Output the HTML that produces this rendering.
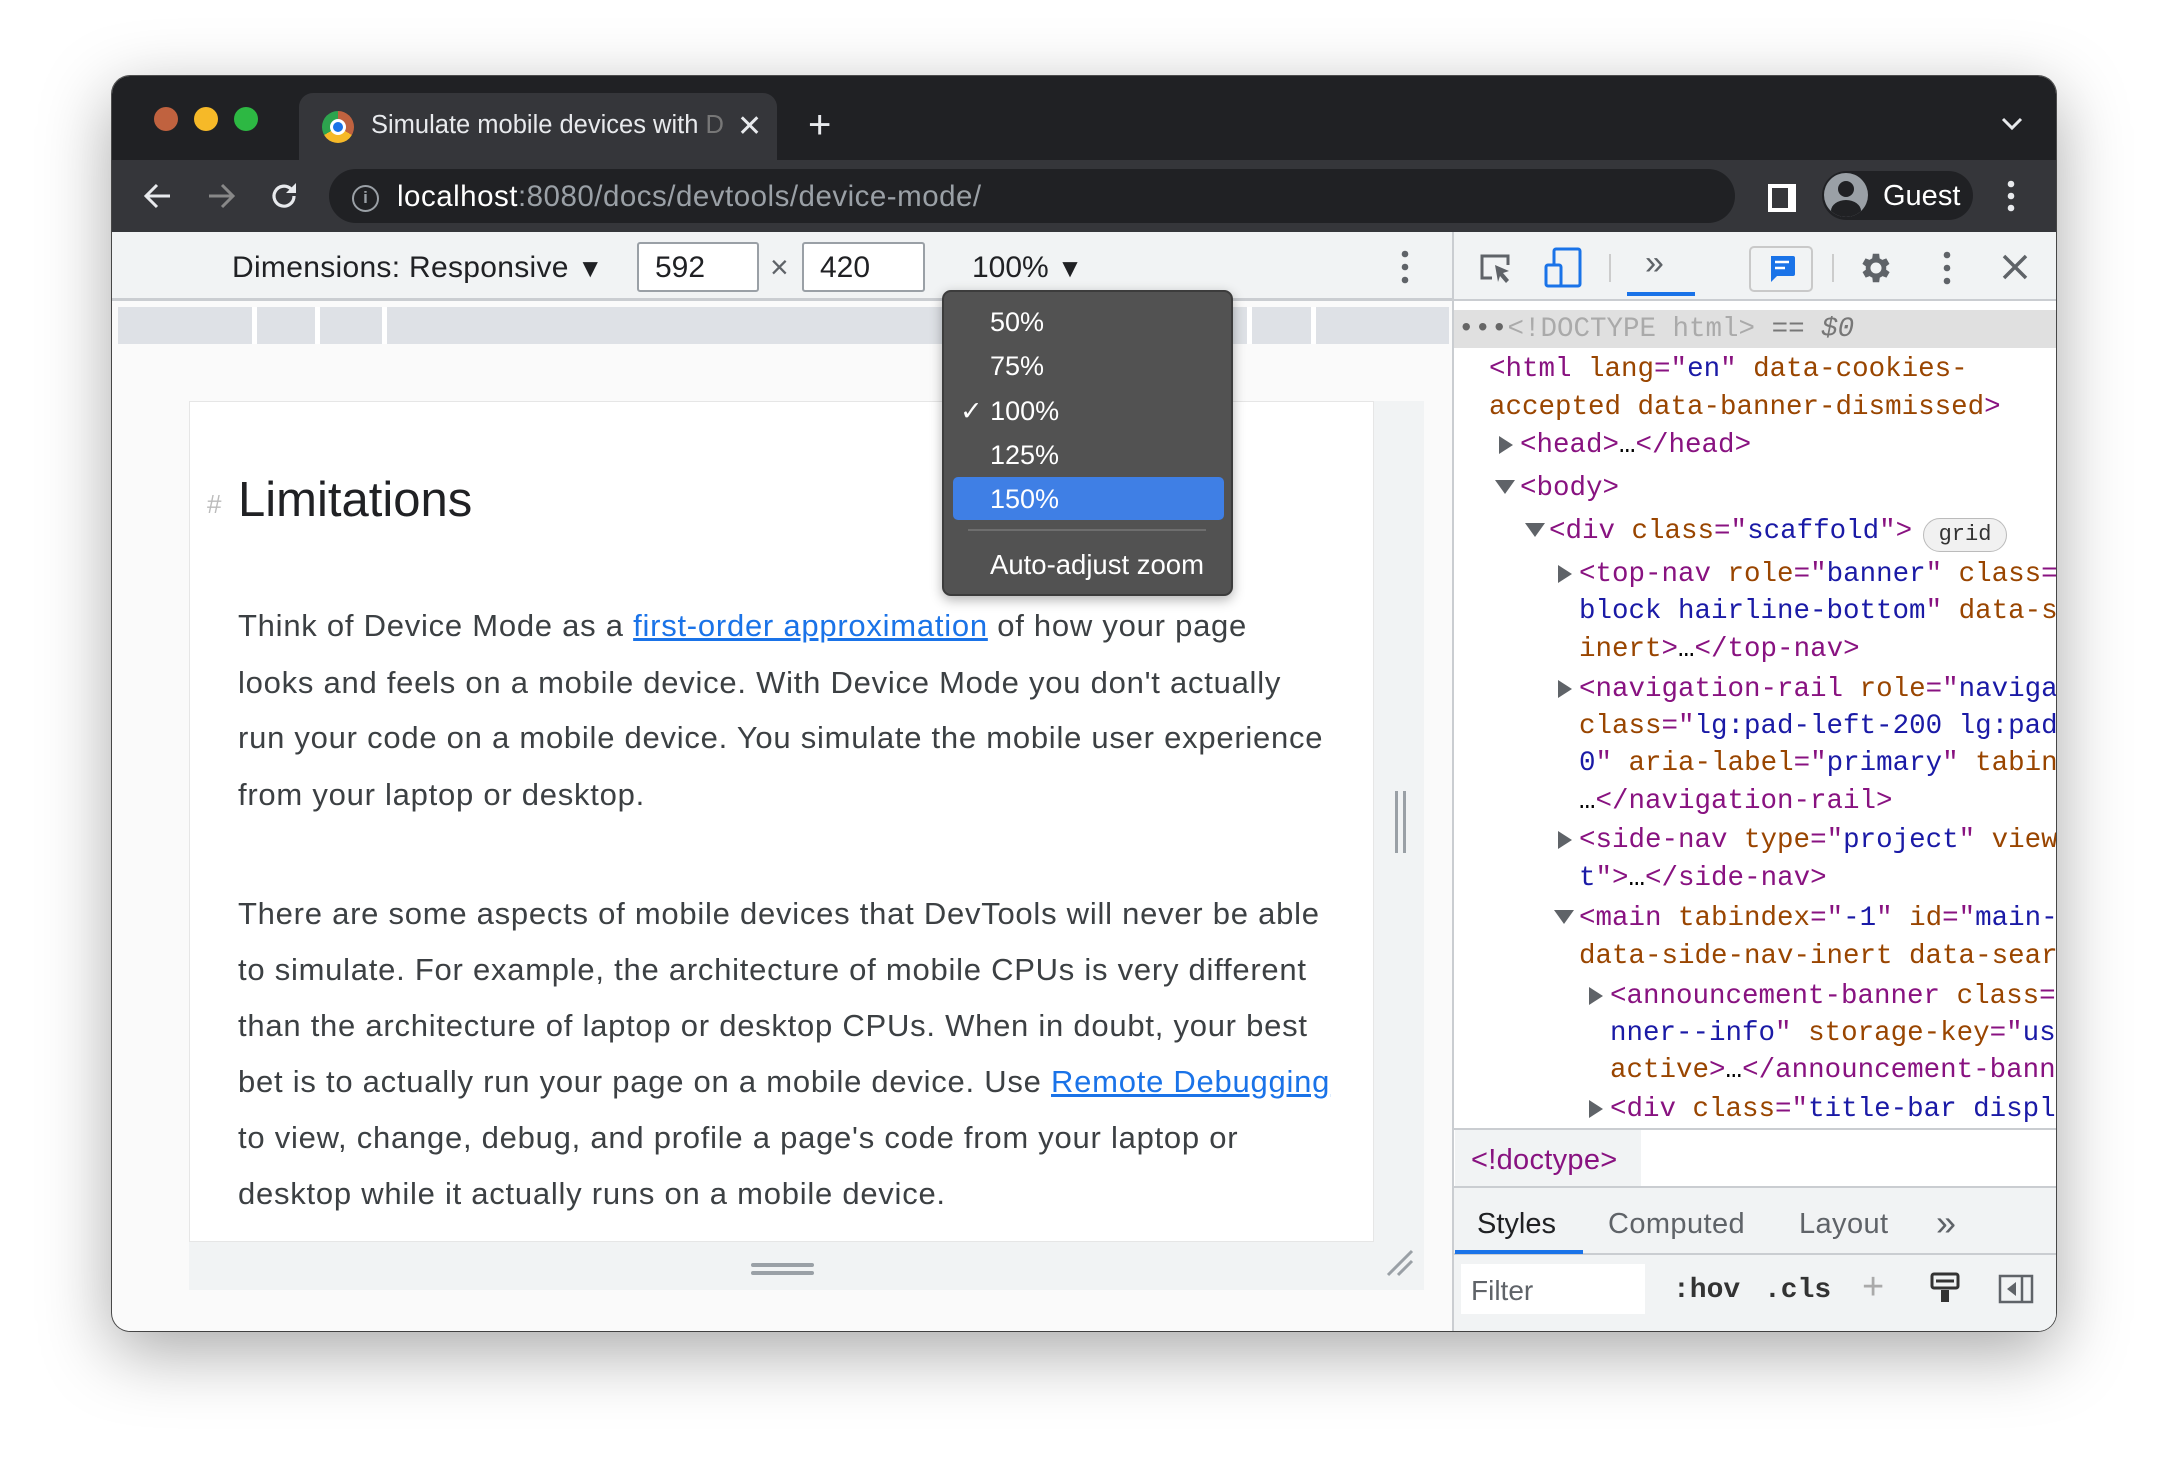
<!DOCTYPE html>
<html><head><meta charset="utf-8"><style>
*{margin:0;padding:0;box-sizing:border-box}
body{width:2168px;height:1480px;background:#fff;position:relative;overflow:hidden;font-family:"Liberation Sans",sans-serif}
.a{position:absolute;white-space:nowrap}
.win{position:absolute;left:112px;top:76px;width:1944px;height:1255px;border-radius:18px;overflow:hidden;background:#fafafa;box-shadow:0 20px 70px rgba(0,0,0,.35),0 0 0 1px #555}
.mono{font-family:"Liberation Mono",monospace;font-size:27.5px}
.t{color:#881280}.n{color:#994500}.v{color:#1a1aa6}
.p{font-size:31px;letter-spacing:0.75px;color:#3c4043}
.lk{color:#1a73e8;text-decoration:underline}
.dd{color:#fff;font-size:27px}
.tr{position:absolute;width:0;height:0;border-left:14px solid #5f6368;border-top:9px solid transparent;border-bottom:9px solid transparent}
.td{position:absolute;width:0;height:0;border-top:14px solid #5f6368;border-left:10px solid transparent;border-right:10px solid transparent}
</style></head><body>
<div class="win">
 <div class="a" style="left:0;top:0;width:1944px;height:84px;background:#202124"></div>
 <div class="a" style="left:42px;top:31px;width:24px;height:24px;border-radius:50%;background:#c0623f"></div>
 <div class="a" style="left:82px;top:31px;width:24px;height:24px;border-radius:50%;background:#f6b928"></div>
 <div class="a" style="left:122px;top:31px;width:24px;height:24px;border-radius:50%;background:#2db843"></div>
 <div class="a" style="left:187px;top:17px;width:478px;height:70px;background:#35363a;border-radius:14px 14px 0 0"></div>
 <div class="a" style="left:210px;top:35px;width:32px;height:32px;border-radius:50%;background:conic-gradient(#c0623f 0 120deg,#f6b928 120deg 240deg,#2da44e 240deg 360deg)"></div>
 <div class="a" style="left:218px;top:43px;width:16px;height:16px;border-radius:50%;background:#1a73e8;border:3px solid #fff"></div>
 <div class="a" style="left:259px;top:35px;font-size:25.5px;color:#e8eaed">Simulate mobile devices with <span style="color:#777">D</span></div>
 <div class="a" style="left:625px;top:33px;font-size:30px;color:#e8eaed">✕</div>
 <div class="a" style="left:696px;top:27px;font-size:40px;color:#e8eaed;font-weight:300">+</div>
 <svg class="a" style="left:1888px;top:40px" width="24" height="16"><path d="M3 3l9 9 9-9" stroke="#e8eaed" stroke-width="3" fill="none"/></svg>
 <div class="a" style="left:0;top:84px;width:1944px;height:72px;background:#35363a"></div>
 <svg class="a" style="left:30px;top:104px" width="32" height="32"><path d="M28 16H5M15 5L4 16l11 11" stroke="#e8eaed" stroke-width="3" fill="none"/></svg>
 <svg class="a" style="left:93px;top:104px" width="32" height="32"><path d="M4 16h23M17 5l11 11-11 11" stroke="#888" stroke-width="3" fill="none"/></svg>
 <svg class="a" style="left:157px;top:104px" width="32" height="32"><path d="M25 16a10 10 0 1 1-3-7" stroke="#e8eaed" stroke-width="3.2" fill="none"/><path d="M27 3v10H17z" fill="#e8eaed"/></svg>
 <div class="a" style="left:217px;top:93px;width:1406px;height:54px;border-radius:27px;background:#202124"></div>
 <div class="a" style="left:240px;top:109px;width:27px;height:27px;border-radius:50%;border:2.5px solid #9aa0a6;color:#9aa0a6;font-size:17px;text-align:center;line-height:22px;font-weight:bold">i</div>
 <div class="a" style="left:285px;top:104px;font-size:29.5px;letter-spacing:0.5px;color:#fff">localhost<span style="color:#9aa0a6">:8080/docs/devtools/device-mode/</span></div>
 <div class="a" style="left:1656px;top:108px;width:28px;height:28px;background:#fff"></div>
 <div class="a" style="left:1660px;top:112px;width:16px;height:20px;background:#35363a"></div>
 <div class="a" style="left:1710px;top:95px;width:151px;height:49px;border-radius:25px;background:#202124"></div>
 <div class="a" style="left:1712px;top:97px;width:44px;height:44px;border-radius:50%;background:#9aa0a6;overflow:hidden"><div class="a" style="left:14px;top:8px;width:16px;height:16px;border-radius:50%;background:#202124"></div><div class="a" style="left:7px;top:27px;width:30px;height:22px;border-radius:50%;background:#202124"></div></div>
 <div class="a" style="left:1771px;top:104px;font-size:29px;color:#fff">Guest</div>
 <svg class="a" style="left:1893px;top:103px" width="12" height="34"><circle cx="6" cy="5" r="3.3" fill="#e8eaed"/><circle cx="6" cy="17" r="3.3" fill="#e8eaed"/><circle cx="6" cy="29" r="3.3" fill="#e8eaed"/></svg>
 <!-- device toolbar -->
 <div class="a" style="left:0;top:156px;width:1340px;height:69px;background:#f1f3f4;border-bottom:3px solid #cacdd1"></div>
 <div class="a" style="left:120px;top:175px;font-size:30px;letter-spacing:0.3px;color:#202124">Dimensions: Responsive <span style="font-size:26px">▼</span></div>
 <div class="a" style="left:525px;top:166px;width:122px;height:50px;background:#fff;border:2px solid #9aa0a6;border-radius:3px;font-size:30px;padding:7px 16px;color:#202124">592</div>
 <div class="a" style="left:658px;top:173px;font-size:32px;color:#5f6368">×</div>
 <div class="a" style="left:690px;top:166px;width:123px;height:50px;background:#fff;border:2px solid #9aa0a6;border-radius:3px;font-size:30px;padding:7px 16px;color:#202124">420</div>
 <div class="a" style="left:860px;top:175px;font-size:30px;color:#202124">100% <span style="font-size:26px">▼</span></div>
 <svg class="a" style="left:1287px;top:173px" width="12" height="36"><circle cx="6" cy="5" r="3.3" fill="#5f6368"/><circle cx="6" cy="18" r="3.3" fill="#5f6368"/><circle cx="6" cy="31" r="3.3" fill="#5f6368"/></svg>
 <div class="a" style="left:6px;top:231px;width:1331px;height:37px;background:#dee1e6"></div>
 <div class="a" style="left:140px;top:231px;width:5px;height:37px;background:#fff"></div>
 <div class="a" style="left:203px;top:231px;width:5px;height:37px;background:#fff"></div>
 <div class="a" style="left:270px;top:231px;width:5px;height:37px;background:#fff"></div>
 <div class="a" style="left:1135px;top:231px;width:5px;height:37px;background:#fff"></div>
 <div class="a" style="left:1199px;top:231px;width:5px;height:37px;background:#fff"></div>
 <!-- page -->
 <div class="a" style="left:77px;top:325px;width:1185px;height:841px;background:#fff;border:1px solid #e6e6e6"></div>
 <div class="a" style="left:1262px;top:325px;width:50px;height:841px;background:#f1f3f4"></div>
 <div class="a" style="left:1283px;top:715px;width:3px;height:62px;background:#9aa0a6"></div>
 <div class="a" style="left:1291px;top:715px;width:3px;height:62px;background:#9aa0a6"></div>
 <div class="a" style="left:77px;top:1166px;width:1235px;height:48px;background:#f1f3f4"></div>
 <div class="a" style="left:639px;top:1187px;width:63px;height:4px;background:#9aa0a6;border-radius:2px"></div>
 <div class="a" style="left:639px;top:1195px;width:63px;height:4px;background:#9aa0a6;border-radius:2px"></div>
 <svg class="a" style="left:1273px;top:1172px" width="30" height="30"><path d="M3 27L27 3M13 27L27 13" stroke="#9aa0a6" stroke-width="3"/></svg>
 <div class="a" style="left:95px;top:413px;font-size:26px;color:#bbb">#</div>
 <div class="a" style="left:126px;top:396px;font-size:49px;color:#202124">Limitations</div>
 <div class="a p" style="left:126px;top:532px">Think of Device Mode as a <span class="lk">first-order approximation</span> of how your page</div>
 <div class="a p" style="left:126px;top:589px">looks and feels on a mobile device. With Device Mode you don't actually</div>
 <div class="a p" style="left:126px;top:644px">run your code on a mobile device. You simulate the mobile user experience</div>
 <div class="a p" style="left:126px;top:701px">from your laptop or desktop.</div>
 <div class="a p" style="left:126px;top:820px">There are some aspects of mobile devices that DevTools will never be able</div>
 <div class="a p" style="left:126px;top:876px">to simulate. For example, the architecture of mobile CPUs is very different</div>
 <div class="a p" style="left:126px;top:932px">than the architecture of laptop or desktop CPUs. When in doubt, your best</div>
 <div class="a p" style="left:126px;top:988px">bet is to actually run your page on a mobile device. Use <span class="lk">Remote Debugging</span></div>
 <div class="a p" style="left:126px;top:1044px">to view, change, debug, and profile a page's code from your laptop or</div>
 <div class="a p" style="left:126px;top:1100px">desktop while it actually runs on a mobile device.</div>
 <!-- dropdown -->
 <div class="a" style="left:830px;top:214px;width:291px;height:306px;background:#525252;border:2px solid #3c3c3c;border-radius:9px;box-shadow:0 4px 12px rgba(0,0,0,.3)"></div>
 <div class="a" style="left:841px;top:401px;width:271px;height:43px;background:#3f7fe5;border-radius:5px"></div>
 <div class="a" style="left:856px;top:453px;width:238px;height:2px;background:#6e6e6e"></div>
 <div class="a dd" style="left:878px;top:231px">50%</div>
 <div class="a dd" style="left:878px;top:275px">75%</div>
 <div class="a dd" style="left:848px;top:320px">✓ 100%</div>
 <div class="a dd" style="left:878px;top:364px">125%</div>
 <div class="a dd" style="left:878px;top:408px">150%</div>
 <div class="a dd" style="left:878px;top:473px;font-size:27.5px">Auto-adjust zoom</div>
 <!-- devtools -->
 <div class="a" style="left:1340px;top:156px;width:2px;height:1099px;background:#cacdd1"></div>
 <div class="a" style="left:1342px;top:156px;width:602px;height:1099px;background:#fff"></div>
 <div class="a" style="left:1342px;top:156px;width:602px;height:69px;background:#f1f3f4;border-bottom:2px solid #cacdd1"></div>
 <svg class="a" style="left:1366px;top:174px" width="36" height="36"><path d="M14 28H4V6h26v9" stroke="#5f6368" stroke-width="3" fill="none"/><path d="M17 15l14 6-6 2 6 7-3 3-6-7-2 6z" fill="#5f6368"/></svg>
 <svg class="a" style="left:1432px;top:170px" width="40" height="44"><rect x="10" y="3" width="26" height="37" rx="2" stroke="#1a73e8" stroke-width="3" fill="none"/><rect x="2" y="19" width="15" height="21" rx="2" stroke="#1a73e8" stroke-width="3" fill="#f1f3f4"/></svg>
 <div class="a" style="left:1497px;top:178px;width:2px;height:28px;background:#ccc"></div>
 <div class="a" style="left:1533px;top:168px;font-size:34px;color:#5f6368">»</div>
 <div class="a" style="left:1515px;top:216px;width:68px;height:4px;background:#1a73e8"></div>
 <div class="a" style="left:1637px;top:170px;width:64px;height:46px;border:2px solid #c9c9c9;border-radius:5px"></div>
 <svg class="a" style="left:1655px;top:178px" width="30" height="32"><path d="M4 2h22a2 2 0 0 1 2 2v16a2 2 0 0 1-2 2H10l-6 6z" fill="#1a73e8"/><path d="M8 8h14M8 14h10" stroke="#fff" stroke-width="2.5"/></svg>
 <div class="a" style="left:1720px;top:178px;width:2px;height:28px;background:#ccc"></div>
 <svg class="a" style="left:1745px;top:173px" width="38" height="38" viewBox="0 0 24 24"><path fill="#5f6368" d="M19.4 13a7.6 7.6 0 0 0 0-2l2.1-1.6-2-3.5-2.5 1a7 7 0 0 0-1.7-1L15 3h-4l-.4 2.9a7 7 0 0 0-1.7 1l-2.5-1-2 3.5L6.6 11a7.6 7.6 0 0 0 0 2l-2.1 1.6 2 3.5 2.5-1a7 7 0 0 0 1.7 1L11 21h4l.4-2.9a7 7 0 0 0 1.7-1l2.5 1 2-3.5zM13 15.5a3.5 3.5 0 1 1 0-7 3.5 3.5 0 0 1 0 7z" transform="translate(-1 0)"/></svg>
 <svg class="a" style="left:1829px;top:174px" width="12" height="36"><circle cx="6" cy="5" r="3.3" fill="#5f6368"/><circle cx="6" cy="18" r="3.3" fill="#5f6368"/><circle cx="6" cy="31" r="3.3" fill="#5f6368"/></svg>
 <svg class="a" style="left:1888px;top:176px" width="30" height="30"><path d="M4 4l22 22M26 4L4 26" stroke="#5f6368" stroke-width="3.5"/></svg>
 <!-- dom tree -->
 <div class="a" style="left:1342px;top:234px;width:602px;height:38px;background:#e0e0e0"></div>
 <div class="a mono" style="left:1346px;top:238px;color:#aaa"><span style="color:#666">•••</span>&lt;!DOCTYPE html&gt; <span style="color:#777">==</span> <i style="color:#777">$0</i></div>
 <div class="a mono" style="left:1377px;top:278px"><span class="t">&lt;html</span> <span class="n">lang</span><span class="t">="</span><span class="v">en</span><span class="t">"</span> <span class="n">data-cookies-</span></div>
 <div class="a mono" style="left:1377px;top:316px"><span class="n">accepted data-banner-dismissed</span><span class="t">&gt;</span></div>
 <div class="tr" style="left:1387px;top:360px"></div>
 <div class="a mono" style="left:1408px;top:354px"><span class="t">&lt;head&gt;</span>…<span class="t">&lt;/head&gt;</span></div>
 <div class="td" style="left:1383px;top:404px"></div>
 <div class="a mono" style="left:1408px;top:397px"><span class="t">&lt;body&gt;</span></div>
 <div class="td" style="left:1413px;top:447px"></div>
 <div class="a mono" style="left:1437px;top:440px"><span class="t">&lt;div</span> <span class="n">class</span><span class="t">="</span><span class="v">scaffold</span><span class="t">"&gt;</span></div>
 <div class="a" style="left:1811px;top:442px;width:84px;height:34px;border:1.5px solid #bbb;border-radius:17px;background:#f1f1f1;font-family:'Liberation Mono',monospace;font-size:22px;text-align:center;line-height:31px;color:#333">grid</div>
 <div class="tr" style="left:1446px;top:489px"></div>
 <div class="a mono" style="left:1467px;top:483px"><span class="t">&lt;top-nav</span> <span class="n">role</span><span class="t">="</span><span class="v">banner</span><span class="t">"</span> <span class="n">class</span><span class="t">=</span></div>
 <div class="a mono" style="left:1467px;top:520px"><span class="v">block hairline-bottom</span><span class="t">"</span> <span class="n">data-s</span></div>
 <div class="a mono" style="left:1467px;top:558px"><span class="n">inert</span><span class="t">&gt;</span>…<span class="t">&lt;/top-nav&gt;</span></div>
 <div class="tr" style="left:1446px;top:604px"></div>
 <div class="a mono" style="left:1467px;top:598px"><span class="t">&lt;navigation-rail</span> <span class="n">role</span><span class="t">="</span><span class="v">naviga</span></div>
 <div class="a mono" style="left:1467px;top:635px"><span class="n">class</span><span class="t">="</span><span class="v">lg:pad-left-200 lg:pad</span></div>
 <div class="a mono" style="left:1467px;top:672px"><span class="v">0</span><span class="t">"</span> <span class="n">aria-label</span><span class="t">="</span><span class="v">primary</span><span class="t">"</span> <span class="n">tabin</span></div>
 <div class="a mono" style="left:1467px;top:710px">…<span class="t">&lt;/navigation-rail&gt;</span></div>
 <div class="tr" style="left:1446px;top:755px"></div>
 <div class="a mono" style="left:1467px;top:749px"><span class="t">&lt;side-nav</span> <span class="n">type</span><span class="t">="</span><span class="v">project</span><span class="t">"</span> <span class="n">view</span></div>
 <div class="a mono" style="left:1467px;top:787px"><span class="v">t</span><span class="t">"&gt;</span>…<span class="t">&lt;/side-nav&gt;</span></div>
 <div class="td" style="left:1442px;top:834px"></div>
 <div class="a mono" style="left:1467px;top:827px"><span class="t">&lt;main</span> <span class="n">tabindex</span><span class="t">="</span><span class="v">-1</span><span class="t">"</span> <span class="n">id</span><span class="t">="</span><span class="v">main-</span></div>
 <div class="a mono" style="left:1467px;top:865px"><span class="n">data-side-nav-inert data-sear</span></div>
 <div class="tr" style="left:1477px;top:911px"></div>
 <div class="a mono" style="left:1498px;top:905px"><span class="t">&lt;announcement-banner</span> <span class="n">class</span><span class="t">=</span></div>
 <div class="a mono" style="left:1498px;top:942px"><span class="v">nner--info</span><span class="t">"</span> <span class="n">storage-key</span><span class="t">="</span><span class="v">us</span></div>
 <div class="a mono" style="left:1498px;top:979px"><span class="n">active</span><span class="t">&gt;</span>…<span class="t">&lt;/announcement-bann</span></div>
 <div class="tr" style="left:1477px;top:1024px"></div>
 <div class="a mono" style="left:1498px;top:1018px"><span class="t">&lt;div</span> <span class="n">class</span><span class="t">="</span><span class="v">title-bar displ</span></div>
 <!-- breadcrumb -->
 <div class="a" style="left:1342px;top:1052px;width:602px;height:58px;background:#fff;border-top:2px solid #cacdd1"></div>
 <div class="a" style="left:1343px;top:1054px;width:186px;height:56px;background:#f1f3f4"></div>
 <div class="a" style="left:1359px;top:1068px;font-size:29px;letter-spacing:0.3px;color:#881280">&lt;!doctype&gt;</div>
 <div class="a" style="left:1342px;top:1110px;width:602px;height:69px;background:#f1f3f4;border-top:2px solid #cacdd1;border-bottom:2px solid #cacdd1"></div>
 <div class="a" style="left:1343px;top:1174px;width:128px;height:4px;background:#1a73e8"></div>
 <div class="a" style="left:1365px;top:1132px;font-size:29px;color:#202124">Styles</div>
 <div class="a" style="left:1496px;top:1132px;font-size:29px;letter-spacing:0.4px;color:#5f6368">Computed</div>
 <div class="a" style="left:1687px;top:1132px;font-size:29px;letter-spacing:0.4px;color:#5f6368">Layout</div>
 <div class="a" style="left:1824px;top:1126px;font-size:36px;color:#5f6368">»</div>
 <div class="a" style="left:1342px;top:1179px;width:602px;height:76px;background:#f1f3f4"></div>
 <div class="a" style="left:1349px;top:1188px;width:184px;height:50px;background:#fff"></div>
 <div class="a" style="left:1359px;top:1199px;font-size:28px;color:#5f6368">Filter</div>
 <div class="a" style="left:1561px;top:1199px;font-family:'Liberation Mono',monospace;font-weight:bold;font-size:28px;color:#333">:hov</div>
 <div class="a" style="left:1652px;top:1199px;font-family:'Liberation Mono',monospace;font-weight:bold;font-size:28px;color:#333">.cls</div>
 <div class="a" style="left:1750px;top:1190px;font-size:38px;color:#aaa">+</div>
 <svg class="a" style="left:1818px;top:1196px" width="30" height="32"><rect x="2" y="2" width="26" height="14" rx="2" stroke="#333" stroke-width="3" fill="none"/><path d="M6 9h18" stroke="#333" stroke-width="3"/><rect x="11" y="18" width="8" height="12" fill="#333"/></svg>
 <svg class="a" style="left:1886px;top:1198px" width="36" height="30"><rect x="2" y="2" width="32" height="26" stroke="#5f6368" stroke-width="2.5" fill="none"/><path d="M24 2v26" stroke="#5f6368" stroke-width="2.5"/><path d="M18 8v14l-9-7z" fill="#5f6368"/></svg>
</div>
</body></html>
